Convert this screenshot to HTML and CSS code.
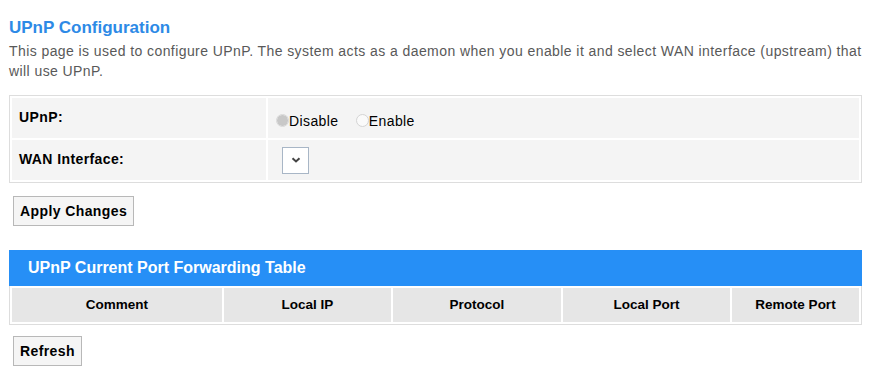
FILE: index.html
```html
<!doctype html>
<html lang="en">
    <head>
        <meta charset="utf-8">
        <title>UPnP Configuration</title>
        <link rel="stylesheet" href="styles.css">
    </head>

    <body>
        <div class="page">
            <div class="title">UPnP Configuration</div>
            <p class="intro">This page is used to configure UPnP. The system acts as a daemon when you enable it and select WAN interface (upstream) that will use UPnP.</p>

            <table class="conf">
                <tr>
                    <td class="label">UPnP:</td>
                    <td class="value">
                        <div class="radios">
                            <label><input type="radio" name="upnp" checked disabled>Disable</label>
                            <label class="second"><input type="radio" name="upnp" disabled>Enable</label>
                        </div>
                    </td>
                </tr>
                <tr>
                    <td class="label">WAN Interface:</td>
                    <td class="value">
                        <span class="select">
                            <select name="wan"></select>
                            <svg width="10" height="6" viewBox="0 0 10 6"><path d="M1.5 1.2 L5 4.5 L8.5 1.2" fill="none" stroke="#444" stroke-width="2"/></svg>
                        </span>
                    </td>
                </tr>
            </table>

            <div class="actions">
                <button type="button">Apply Changes</button>
            </div>

            <div class="ports">
                <div class="ports-head">UPnP Current Port Forwarding Table</div>
                <table class="ports-table">
                    <tr>
                        <th class="c-comment">Comment</th>
                        <th class="c-ip">Local IP</th>
                        <th class="c-proto">Protocol</th>
                        <th class="c-lport">Local Port</th>
                        <th class="c-rport">Remote Port</th>
                    </tr>
                </table>
            </div>

            <div class="actions refresh">
                <button type="button">Refresh</button>
            </div>
        </div>
    </body>
</html>
```

FILE: styles.css
```css
*{
    box-sizing: border-box;
}
html{
    font-family: "Liberation Sans", Arial, sans-serif;
    font-size: 14px;
}
body{
    margin: 0;
    background: #fff;
    color: #000;
}
.page{
    padding: 18px 13px 0 9px;
}
.title{
    font-size: 17px;
    line-height: 19px;
    font-weight: bold;
    color: #2d8ae6;
    margin-bottom: 4px;
}
.intro{
    margin: 0 0 14px;
    font-size: 14px;
    line-height: 20px;
    letter-spacing: 0.42px;
    color: #595959;
}

/* settings box */
.conf{
    width: 100%;
    table-layout: fixed;
    border: 1px solid #ddd;
    border-spacing: 2px;
}
.conf td{
    height: 40px;
    background: #f4f4f4;
    vertical-align: middle;
}
.conf .label{
    width: 254px;
    padding: 0 7px 2px;
    font-weight: bold;
    letter-spacing: 0.4px;
}
.conf .value{
    padding: 0 8px;
}
.radios{
    padding-top: 5px;
    letter-spacing: 0.4px;
}
.radios .second{
    margin-left: 13px;
}
.radios input{
    appearance: none;
    -webkit-appearance: none;
    width: 13px;
    height: 13px;
    margin: 0;
    border: 1px solid #d4d4d4;
    border-radius: 50%;
    background: #fafafa;
    vertical-align: -1px;
}
.radios input:checked{
    border-color: #d8d8d8;
    background: radial-gradient(circle, #c8c8c8 0 5px, #e0e0e0 5.5px);
}
.select{
    position: relative;
    display: inline-block;
    margin-left: 6px;
    vertical-align: middle;
}
.select select{
    appearance: none;
    -webkit-appearance: none;
    display: block;
    width: 27px;
    height: 27px;
    margin: 0;
    border: 1px solid #a8b6c6;
    border-radius: 0;
    background: #fff;
}
.select svg{
    position: absolute;
    left: 9px;
    top: 10px;
    pointer-events: none;
}

/* buttons */
.actions{
    margin-top: 13px;
}
.actions button{
    margin-left: 4px;
    padding: 6px 6px;
    font-family: "Liberation Sans", Arial, sans-serif;
    font-size: 14px;
    line-height: 16px;
    font-weight: bold;
    letter-spacing: 0.4px;
    color: #000;
    background: #f5f5f5;
    border: 1px solid #b8b8b8;
    border-radius: 0;
}
.refresh{
    margin-top: 11px;
}

/* forwarding table */
.ports{
    margin-top: 24px;
}
.ports-head{
    height: 36px;
    line-height: 36px;
    padding-left: 19px;
    background: #268ff6;
    color: #fff;
    font-size: 16px;
    font-weight: bold;
}
.ports-table{
    width: 100%;
    table-layout: fixed;
    border: 1px solid #ddd;
    border-top: 0;
    border-spacing: 2px;
}
.ports-table th{
    height: 34px;
    padding-bottom: 3px;
    background: #e6e6e6;
    font-size: 13.5px;
    font-weight: bold;
    text-align: center;
}
.c-comment{
    width: 210px;
}
.c-ip{
    width: 167px;
}
.c-proto{
    width: 168px;
}
.c-lport{
    width: 167px;
}
```
